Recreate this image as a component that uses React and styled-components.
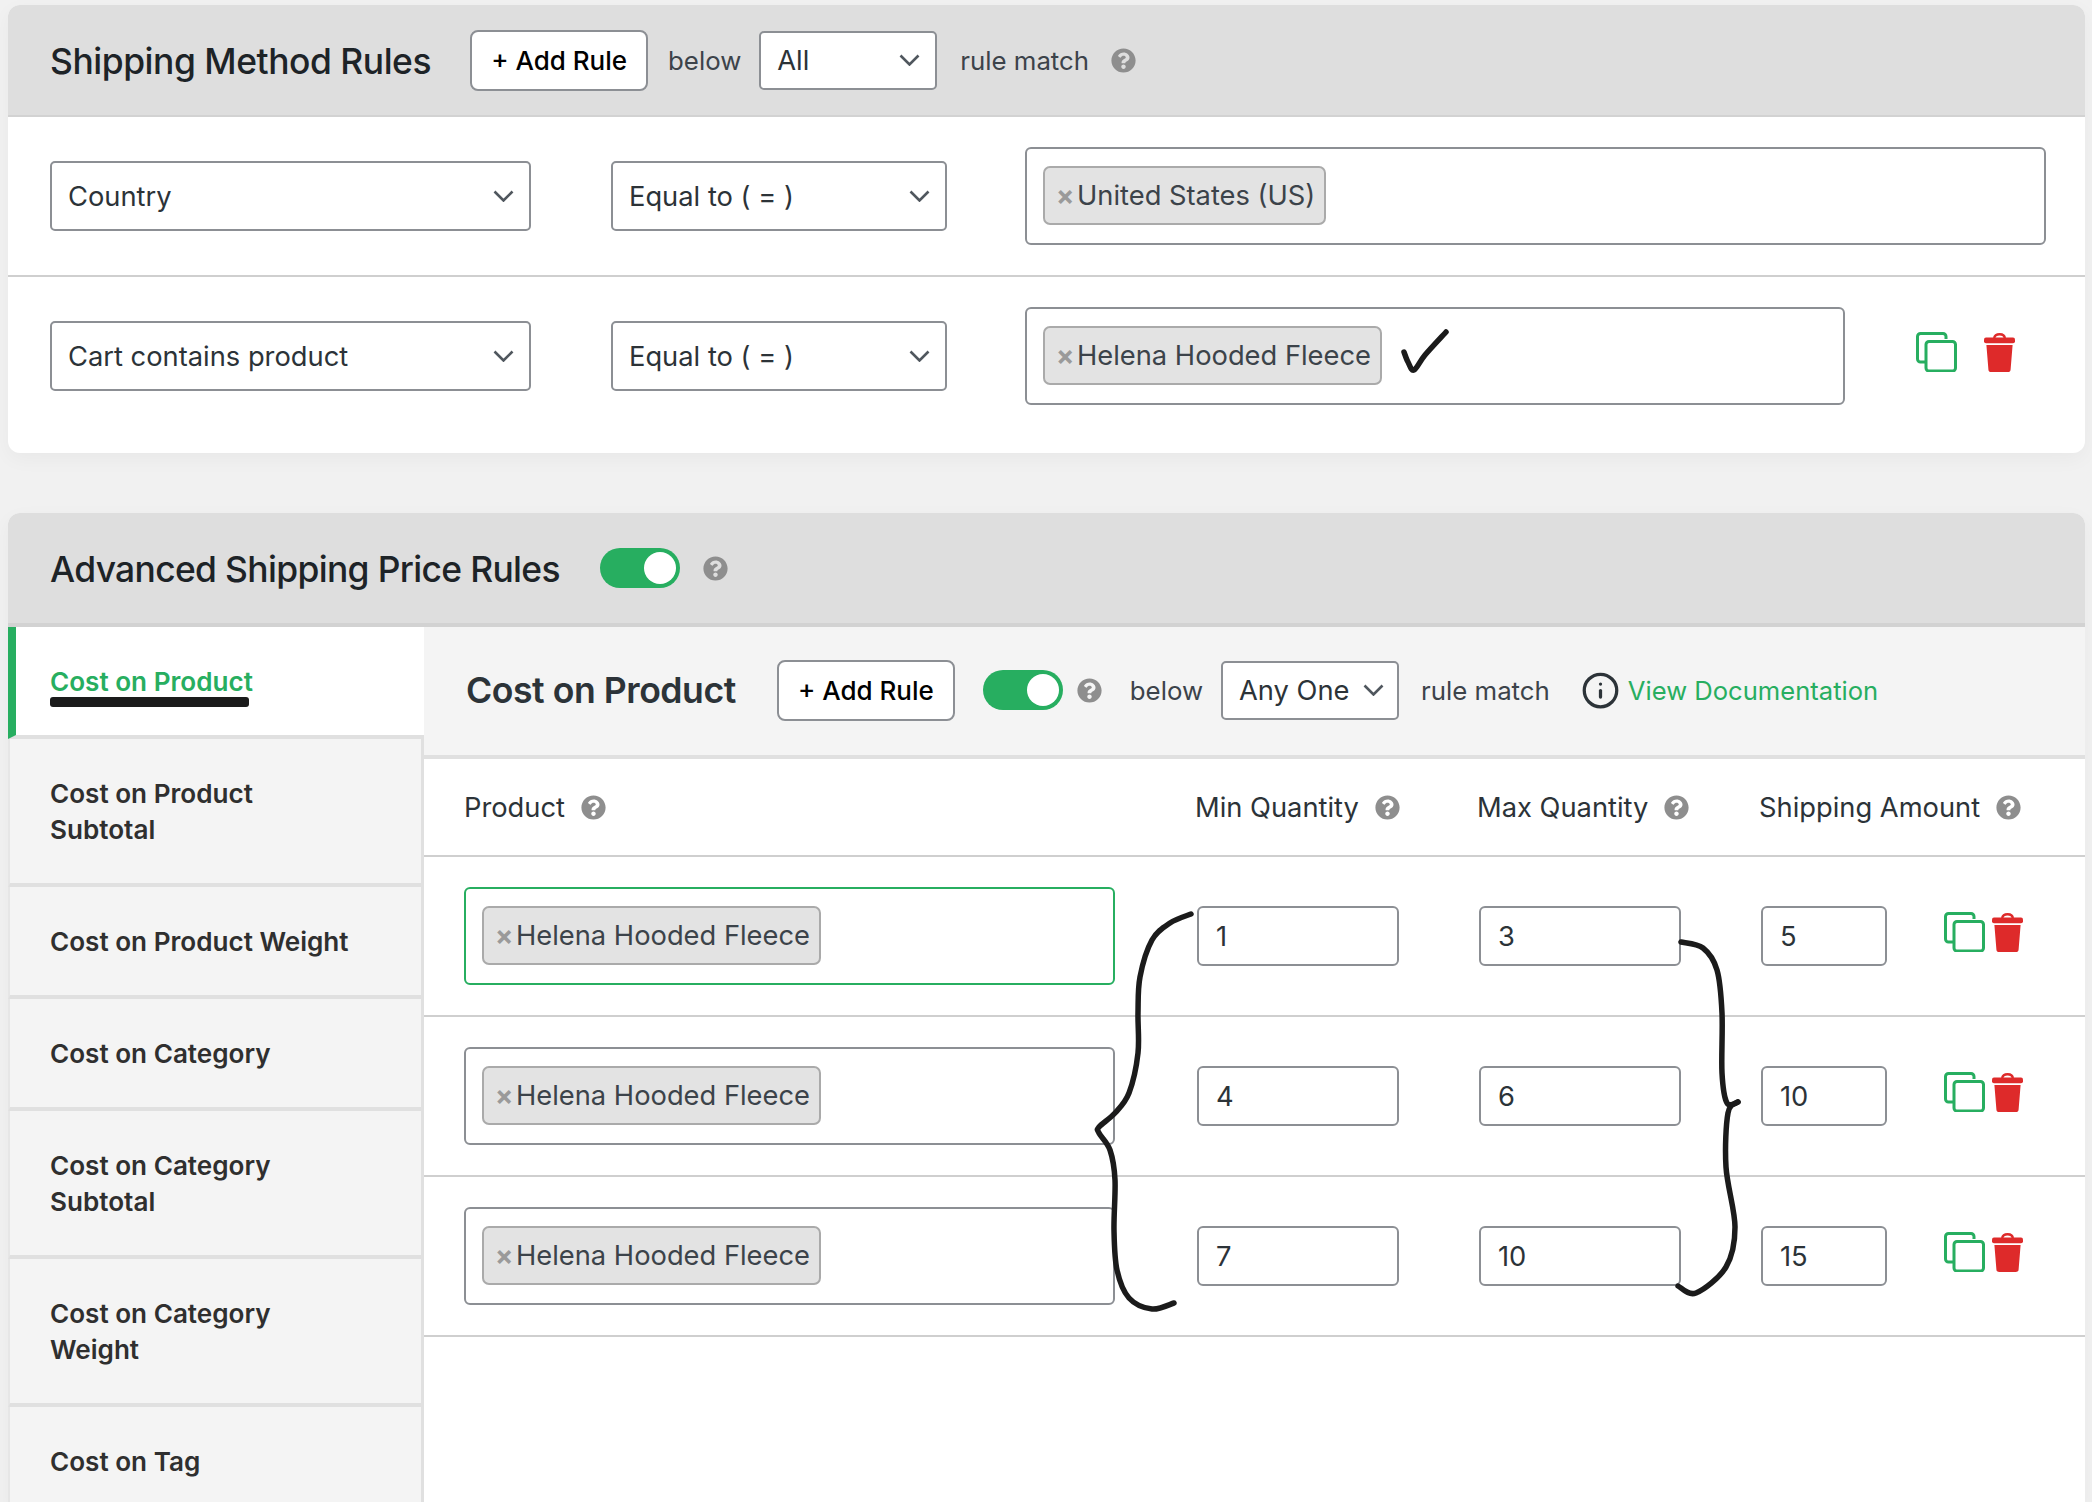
import styled, { createGlobalStyle } from "styled-components";
import { FaQuestionCircle } from "react-icons/fa";
import { Info } from "lucide-react";

const GlobalStyle = createGlobalStyle`
  html, body {
    margin: 0;
    padding: 0;
    background: #f1f1f1;
  }
  * {
    box-sizing: border-box;
  }
`;

const Page = styled.div`
  position: relative;
  width: 2092px;
  height: 1502px;
  overflow: hidden;
  padding: 5px 7px 0 8px;
  background: #f1f1f1;
  font-family: Inter, "Liberation Sans", sans-serif;
  font-size: 27.3px;
  color: #2c3338;
`;

const Panel = styled.section`
  background: #fff;
  border-radius: 12px;
  box-shadow: 0 6px 20px rgba(0, 0, 0, 0.04);
  overflow: hidden;
  margin-bottom: 60px;
`;

const PanelHeader = styled.header`
  display: flex;
  align-items: center;
  height: ${(p) => p.$height}px;
  padding-left: 42px;
  background: #dedede;
  border-bottom: ${(p) => p.$border}px solid #d2d2d2;
`;

const PanelTitle = styled.h2`
  margin: 2px 0 0;
  font-size: 35.4px;
  font-weight: 500;
  letter-spacing: ${(p) => p.$spacing}px;
  color: #1d2327;
  white-space: nowrap;
`;

const Button = styled.div`
  display: flex;
  align-items: center;
  justify-content: center;
  width: 178px;
  height: 61px;
  background: #fff;
  border: 2px solid #8c8f94;
  border-radius: 8px;
  color: #000;
  font-weight: 500;
  font-size: 26px;
`;

const Label = styled.span`
  font-size: 25.8px;
  color: #3c434a;
  white-space: nowrap;
`;

const Select = styled.div`
  display: flex;
  align-items: center;
  justify-content: space-between;
  width: ${(p) => p.$width}px;
  height: ${(p) => p.$height}px;
  padding: 0 ${(p) => p.$right ?? 15}px 0 16px;
  background: #fff;
  border: 2px solid #8c8f94;
  border-radius: 5px;
  white-space: nowrap;
`;

const Chevron = styled.svg`
  flex: none;
  width: 21px;
  height: 12px;
  fill: none;
  stroke: #50575e;
  stroke-width: 2.6;
`;

const HelpIcon = styled(FaQuestionCircle)`
  flex: none;
  font-size: 25px;
  color: #8e8e8e;
`;

const ShippingToolbar = styled.div`
  display: flex;
  align-items: center;
  margin-left: 39px;
  ${Label} {
    margin-left: 20px;
  }
  ${Select} {
    margin-left: 18px;
  }
  ${Select} + ${Label} {
    margin-left: 23px;
  }
  ${HelpIcon} {
    margin-left: 22px;
  }
`;

const RuleRow = styled.div`
  display: flex;
  align-items: center;
  height: ${(p) => p.$height}px;
  padding: 0 0 ${(p) => p.$pad}px 42px;
  border-bottom: ${(p) => (p.$last ? "none" : "2px solid #cfcfcf")};
  & > ${Select}:nth-child(2) {
    margin: 0 78px 0 80px;
  }
`;

const MultiBox = styled.div`
  display: flex;
  align-items: center;
  width: ${(p) => p.$width}px;
  height: 98px;
  padding-left: 16px;
  background: #fff;
  border: 2px solid ${(p) => (p.$active ? "#27ae60" : "#8c8f94")};
  border-radius: 6px;
`;

const Chip = styled.div`
  display: flex;
  align-items: center;
  height: 59px;
  margin-top: -2px;
  padding: 0 9px 0 11px;
  background: #e3e3e3;
  border: 2px solid #aaa;
  border-radius: 7px;
  color: #3c434a;
  white-space: nowrap;
`;

const ChipX = styled.span`
  width: 21px;
  color: #9a9a9a;
  font-weight: 700;
  font-size: 27px;
`;

const CopySvg = styled.svg`
  flex: none;
  width: 41px;
  height: 40px;
  fill: none;
  stroke: #27ae60;
  stroke-width: 3;
`;

const TrashSvg = styled.svg`
  flex: none;
  width: 31px;
  height: 39px;
  fill: #de2a2a;
`;

const RowActions = styled.div`
  display: flex;
  align-items: center;
  gap: ${(p) => p.$gap}px;
  margin-left: ${(p) => p.$left}px;
  margin-top: -8px;
`;

const Toggle = styled.div`
  flex: none;
  display: flex;
  align-items: center;
  justify-content: flex-end;
  width: 80px;
  height: 40px;
  padding-right: 4px;
  background: #27ae60;
  border-radius: 20px;
`;

const ToggleKnob = styled.span`
  width: 32px;
  height: 32px;
  background: #fff;
  border-radius: 50%;
`;

const PriceHeaderExtras = styled.div`
  display: flex;
  align-items: center;
  margin-left: 40px;
  gap: 23px;
`;

const Body = styled.div`
  display: flex;
  align-items: stretch;
`;

const Sidebar = styled.nav`
  flex: none;
  width: 416px;
  border-right: 3px solid #e0e0e0;
`;

const Tab = styled.div`
  padding: 37px 20px 35px ${(p) => (p.$active ? 34 : 40)}px;
  background: ${(p) => (p.$active ? "#fff" : "#f4f4f4")};
  border-left: ${(p) => (p.$active ? "8px solid #27ae60" : "2px solid #e6e6e6")};
  border-bottom: 4px solid #e0e0e0;
  color: ${(p) => (p.$active ? "#27ae60" : "#2f2f2f")};
  font-size: 26.1px;
  font-weight: 600;
  line-height: 36px;
  width: ${(p) => (p.$active ? 416 : 413)}px;
`;

const Main = styled.div`
  flex: 1;
  min-width: 0;
`;

const MainBar = styled.div`
  display: flex;
  align-items: center;
  height: 132px;
  padding: 0 0 2px 42px;
  background: #f4f4f4;
  border-bottom: 4px solid #e0e0e0;
`;

const MainTitle = styled.h3`
  margin: 0 41px 0 0;
  font-size: 35.6px;
  font-weight: 600;
  letter-spacing: -0.45px;
  color: #2c3338;
  white-space: nowrap;
`;

const ToolbarToggle = styled(Toggle)`
  margin-left: 28px;
`;

const BarHelp = styled(HelpIcon)`
  margin-left: 14px;
`;

const BarLabel = styled(Label)`
  margin-left: 28px;
`;

const BarSelect = styled(Select)`
  margin-left: 18px;
  margin-right: -6px;
`;

const DocLink = styled.a`
  display: flex;
  align-items: center;
  gap: 8px;
  margin-left: 31px;
  color: #27ae60;
  font-size: 25.6px;
  white-space: nowrap;
  svg {
    color: #2c3338;
  }
`;

const GridRow = styled.div`
  display: grid;
  grid-template-columns: 733px 282px 282px 1fr;
  align-items: center;
  height: ${(p) => p.$height}px;
  padding-left: 40px;
  border-bottom: 2px solid #cfcfcf;
`;

const HeadCell = styled.div`
  display: flex;
  align-items: center;
  gap: 16px;
  margin-left: ${(p) => p.$shift || 0}px;
  color: #2c3338;
  white-space: nowrap;
`;

const NumberBox = styled.div`
  display: flex;
  align-items: center;
  width: ${(p) => p.$width}px;
  height: 60px;
  padding-left: 17px;
  background: #fff;
  border: 2px solid #8c8f94;
  border-radius: 6px;
`;

const LastCell = styled.div`
  display: flex;
  align-items: center;
`;

const Overlay = styled.svg`
  position: absolute;
  left: 0;
  top: 0;
  width: 2092px;
  height: 1502px;
  pointer-events: none;
  fill: none;
  stroke: #1b1b1b;
  stroke-width: 5.5;
  stroke-linecap: round;
  stroke-linejoin: round;
`;

// catmull-rom through hand marked points, for the pen strokes
function smooth(points) {
  let d = `M${points[0][0]} ${points[0][1]}`;
  for (let i = 0; i < points.length - 1; i++) {
    const p0 = points[i - 1] || points[i];
    const p1 = points[i];
    const p2 = points[i + 1];
    const p3 = points[i + 2] || p2;
    const c1 = [p1[0] + (p2[0] - p0[0]) / 6, p1[1] + (p2[1] - p0[1]) / 6];
    const c2 = [p2[0] - (p3[0] - p1[0]) / 6, p2[1] - (p3[1] - p1[1]) / 6];
    d += ` C${c1[0]} ${c1[1]} ${c2[0]} ${c2[1]} ${p2[0]} ${p2[1]}`;
  }
  return d;
}

const leftBrace = [
  [1191, 914], [1170, 923], [1152, 940], [1140, 977], [1138, 1013], [1138, 1053],
  [1129, 1093], [1115, 1113], [1099, 1127], [1099, 1133], [1110, 1150], [1115, 1180],
  [1114, 1230], [1117, 1270], [1129, 1298], [1152, 1309], [1174, 1303],
];

const rightBrace = [
  [1681, 942], [1703, 948], [1717, 970], [1722, 1013], [1722, 1073], [1727, 1103], [1738, 1102],
];

const rightBraceLower = [
  [1738, 1102], [1728, 1113], [1726, 1167], [1735, 1227], [1726, 1267], [1696, 1293], [1678, 1286],
];

const tabs = [
  ["Cost on Product"],
  ["Cost on Product", "Subtotal"],
  ["Cost on Product Weight"],
  ["Cost on Category"],
  ["Cost on Category", "Subtotal"],
  ["Cost on Category", "Weight"],
  ["Cost on Tag"],
];

const priceRows = [
  { min: "1", max: "3", amount: "5", active: true },
  { min: "4", max: "6", amount: "10" },
  { min: "7", max: "10", amount: "15" },
];

function ChevronIcon() {
  return (
    <Chevron viewBox="0 0 21 12">
      <path d="M1.5 1.5 10.5 10.5 19.5 1.5" />
    </Chevron>
  );
}

function CopyIcon() {
  return (
    <CopySvg viewBox="0 0 41 40">
      <path d="M30 7V4.5a3 3 0 0 0-3-3H4.5a3 3 0 0 0-3 3V27a3 3 0 0 0 3 3H9" />
      <rect x="10" y="9.5" width="29.5" height="29.5" rx="3" />
    </CopySvg>
  );
}

function TrashIcon() {
  return (
    <TrashSvg viewBox="0 0 31 39">
      <path d="M10.2 5.5C10.2 2.6 12.6 1.2 15.5 1.2s5.3 1.4 5.3 4.3" fill="none" stroke="#de2a2a" strokeWidth="2.4" />
      <rect x="0" y="4.6" width="31" height="5.6" rx="2" />
      <path d="M2.4 12H28.6L26.6 36.4A2.8 2.8 0 0 1 23.8 39H7.2A2.8 2.8 0 0 1 4.4 36.4Z" />
    </TrashSvg>
  );
}

function ProductChip({ children }) {
  return (
    <Chip>
      <ChipX>×</ChipX>
      {children}
    </Chip>
  );
}

export default function App() {
  return (
    <Page>
      <GlobalStyle />

      <Panel>
        <PanelHeader $height={112} $border={2}>
          <PanelTitle $spacing={-0.45}>Shipping Method Rules</PanelTitle>
          <ShippingToolbar>
            <Button>+ Add Rule</Button>
            <Label>below</Label>
            <Select $width={178} $height={59}>
              All
              <ChevronIcon />
            </Select>
            <Label>rule match</Label>
            <HelpIcon />
          </ShippingToolbar>
        </PanelHeader>
        <RuleRow $height={160} $pad={0}>
          <Select $width={481} $height={70}>
            Country
            <ChevronIcon />
          </Select>
          <Select $width={336} $height={70}>
            Equal to ( = )
            <ChevronIcon />
          </Select>
          <MultiBox $width={1021}>
            <ProductChip>United States (US)</ProductChip>
          </MultiBox>
        </RuleRow>
        <RuleRow $height={176} $pad={18} $last>
          <Select $width={481} $height={70}>
            Cart contains product
            <ChevronIcon />
          </Select>
          <Select $width={336} $height={70}>
            Equal to ( = )
            <ChevronIcon />
          </Select>
          <MultiBox $width={820}>
            <ProductChip>Helena Hooded Fleece</ProductChip>
          </MultiBox>
          <RowActions $gap={27} $left={71}>
            <CopyIcon />
            <TrashIcon />
          </RowActions>
        </RuleRow>
      </Panel>

      <Panel>
        <PanelHeader $height={114} $border={4}>
          <PanelTitle $spacing={-0.65}>Advanced Shipping Price Rules</PanelTitle>
          <PriceHeaderExtras>
            <Toggle>
              <ToggleKnob />
            </Toggle>
            <HelpIcon />
          </PriceHeaderExtras>
        </PanelHeader>
        <Body>
          <Sidebar>
            {tabs.map((lines, i) => (
              <Tab key={i} $active={i === 0}>
                {lines.map((line) => (
                  <div key={line}>{line}</div>
                ))}
              </Tab>
            ))}
          </Sidebar>
          <Main>
            <MainBar>
              <MainTitle>Cost on Product</MainTitle>
              <Button>+ Add Rule</Button>
              <ToolbarToggle>
                <ToggleKnob />
              </ToolbarToggle>
              <BarHelp />
              <BarLabel>below</BarLabel>
              <BarSelect $width={178} $height={59} $right={13}>
                Any One
                <ChevronIcon />
              </BarSelect>
              <BarLabel>rule match</BarLabel>
              <DocLink>
                <Info size={39} strokeWidth={2} />
                View Documentation
              </DocLink>
            </MainBar>
            <GridRow $height={98}>
              <HeadCell>
                Product <HelpIcon />
              </HeadCell>
              <HeadCell $shift={-2}>
                Min Quantity <HelpIcon />
              </HeadCell>
              <HeadCell $shift={-2}>
                Max Quantity <HelpIcon />
              </HeadCell>
              <HeadCell $shift={-2}>
                Shipping Amount <HelpIcon />
              </HeadCell>
            </GridRow>
            {priceRows.map((row) => (
              <GridRow key={row.min} $height={160}>
                <MultiBox $width={651} $active={row.active}>
                  <ProductChip>Helena Hooded Fleece</ProductChip>
                </MultiBox>
                <NumberBox $width={202}>{row.min}</NumberBox>
                <NumberBox $width={202}>{row.max}</NumberBox>
                <LastCell>
                  <NumberBox $width={126}>{row.amount}</NumberBox>
                  <RowActions $gap={7} $left={57}>
                    <CopyIcon />
                    <TrashIcon />
                  </RowActions>
                </LastCell>
              </GridRow>
            ))}
          </Main>
        </Body>
      </Panel>

      <Overlay viewBox="0 0 2092 1502">
        <path d={smooth([[1404, 352], [1408, 362], [1414, 370], [1425, 355], [1446, 332]])} />
        <path d={smooth(leftBrace)} />
        <path d={smooth(rightBrace)} />
        <path d={smooth(rightBraceLower)} />
        <rect x="50" y="697" width="199" height="10" rx="3" fill="#1b1b1b" stroke="none" />
      </Overlay>
    </Page>
  );
}
